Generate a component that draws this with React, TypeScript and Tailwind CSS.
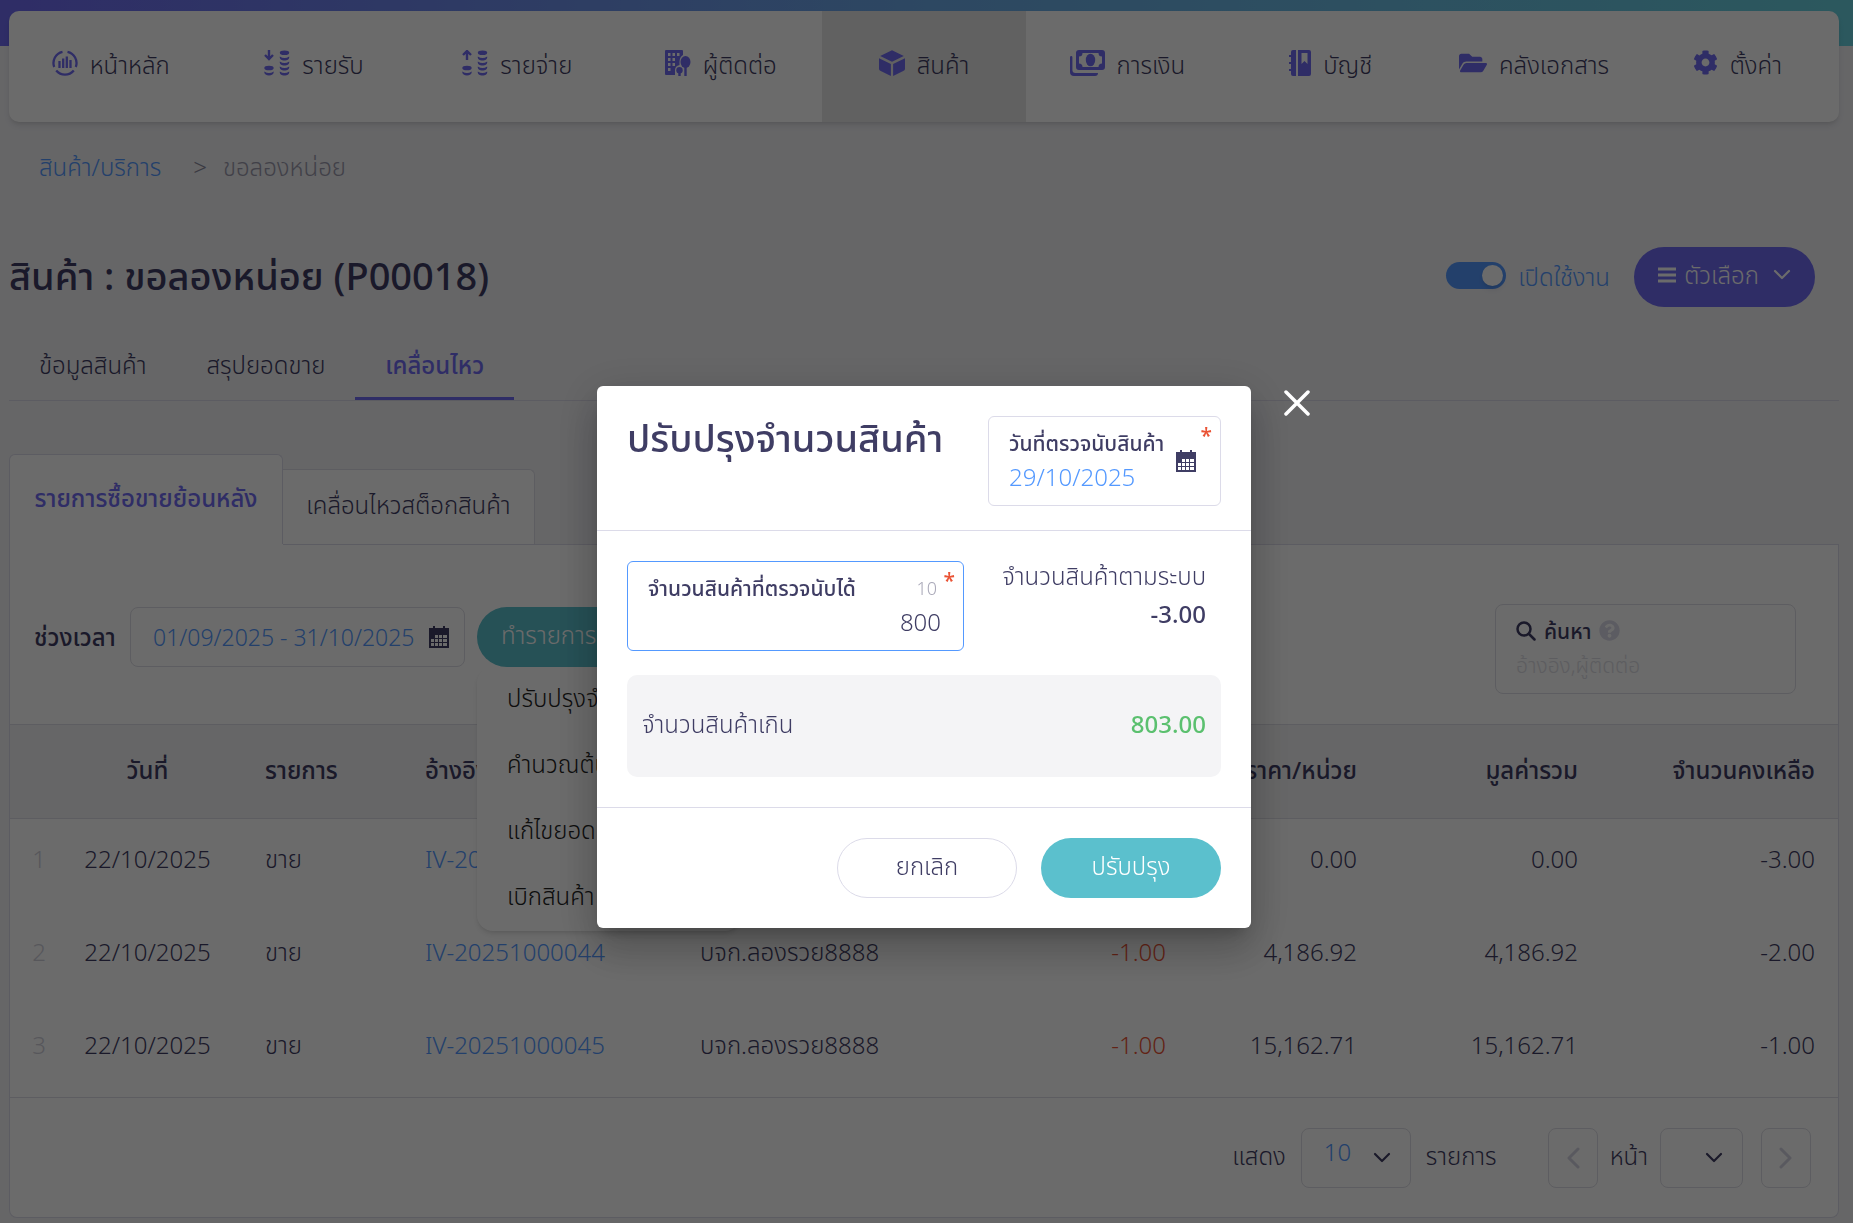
import type { ReactNode } from "react";
import { FaCog, FaFolderOpen, FaQuestionCircle } from "react-icons/fa";

interface NavItem { label: string; icon: ReactNode; active?: boolean }

function HomeIcon() {
  return (
    <svg width="26" height="26" viewBox="0 0 26 26" fill="none" stroke="currentColor" strokeWidth="2.300">
      <path d="M10.500 1.800A11.500 11.500 0 0 0 2.200 17M15.500 1.800A11.500 11.500 0 0 1 23.800 17M4.200 20.500a11.500 11.500 0 0 0 17.600 0" />
      <path d="M7.500 11v7M11.200 8.500v9.500M14.800 6.500v11.500M18.500 10v8" />
    </svg>
  );
}

function CoinsIcon({ up }: { up?: boolean }) {
  return (
    <svg width="26" height="26" viewBox="0 0 26 26" fill="currentColor">
      <ellipse cx="20.500" cy="2.800" rx="4.700" ry="2.300" />
      <path d="M15.800 6.500q4.700 3 9.400 0c.4 2.600-1.800 4-4.700 4s-5.100-1.400-4.700-4zM15.800 11.500q4.700 3 9.400 0c.4 2.600-1.800 4-4.700 4s-5.100-1.400-4.700-4zM15.800 16.500q4.700 3 9.400 0c.4 2.600-1.800 4-4.700 4s-5.100-1.400-4.700-4zM15.800 21.500q4.700 3 9.400 0c.4 2.600-1.800 4-4.700 4s-5.100-1.400-4.700-4z" />
      <ellipse cx="5" cy="18" rx="4.700" ry="2.300" />
      <path d="M.3 21.500q4.700 3 9.400 0c.4 2.600-1.800 4-4.700 4s-5.100-1.400-4.700-4z" />
      <path d={up ? "M5 .5v9.500M1 5l4-4 4 4" : "M5 0v9.500M1 5l4 4 4-4"} fill="none" stroke="currentColor" strokeWidth="2.400" />
    </svg>
  );
}

function ContactIcon() {
  return (
    <svg width="26" height="26" viewBox="0 0 26 26" fill="currentColor">
      <path fillRule="evenodd" d="M1 0h16q1 0 1 1v4q-3.500 2-3.500 7v3q-4.500 1-4.500 5v5H1q-1 0-1-1V1q0-1 1-1zM3 3v3h2.500V3zM7.500 3v3H10V3zM12 3v3h2.500V3zM3 8v3h2.500V8zM7.500 8v3H10V8zM3 13v3h2.500v-3zM7.500 13v3H10v-3zM3 18v3h2.500v-3z" />
      <ellipse cx="20.500" cy="12" rx="5" ry="6" />
      <path d="M19.300 16h2.400v10h-2.400zM13.300 20h2.400v6h-2.400z" />
      <circle cx="14.500" cy="20.300" r="3.200" />
    </svg>
  );
}

function CubeIcon() {
  return (
    <svg width="26" height="26" viewBox="0 0 26 26" fill="currentColor">
      <path d="M13 .3L24.800 6 13 11.700 1.200 6zM0 8.300l11.900 5.800V26L1.300 20.800Q0 20.200 0 18.800zM26 8.300l-11.900 5.800V26l10.600-5.200q1.300-.6 1.300-2z" />
    </svg>
  );
}

function MoneyIcon() {
  return (
    <svg width="35" height="26" viewBox="0 0 35 26" fill="currentColor">
      <path fillRule="evenodd" d="M9 0h23q3 0 3 3v14q0 3-3 3H9q-3 0-3-3V3q0-3 3-3zM12.500 3q0 3.500-3.500 3.500v7q3.500 0 3.500 3.500h16q0-3.500 3.500-3.500v-7q-3.500 0-3.500-3.500z" />
      <ellipse cx="20.500" cy="10" rx="4.700" ry="6.300" />
      <path d="M0 7.200Q0 6 1.200 6t1.200 1.200V20q0 3 3 3H28q0 3-3 3H4q-4 0-4-4z" />
    </svg>
  );
}

function BookIcon() {
  return (
    <svg width="22" height="26" viewBox="0 0 22 26" fill="currentColor">
      <path d="M4 0h3v26H4q-2 0-2-2v-3H0v-2h2v-5H0v-2h2V7H0V5h2V2q0-2 2-2z" />
      <path fillRule="evenodd" d="M9 0h11q2 0 2 2v22q0 2-2 2H9zM12.500 3v11l3-3 3 3V3z" />
    </svg>
  );
}

function CalendarIcon() {
  return (
    <svg width="20" height="22" viewBox="0 0 20 22" fill="currentColor" className="shrink-0">
      <path d="M4 0h2v2H4zM14 0h2v2h-2z" />
      <path fillRule="evenodd" d="M0 2h20v20H0zM6 9v3h3V9zM10 9v3h3V9zM14 9v3h4V9zM2 13v3h3v-3zM6 13v3h3v-3zM10 13v3h3v-3zM14 13v3h4v-3zM2 17v3h3v-3zM6 17v3h3v-3zM10 17v3h3v-3zM14 17v3h4v-3z" />
    </svg>
  );
}

function Chevron({ className }: { className?: string }) {
  return (
    <svg width="18" height="12" viewBox="0 0 18 12" fill="none" stroke="currentColor" strokeWidth="2.200" strokeLinecap="round" strokeLinejoin="round" className={className}>
      <path d="M2 2l7 7 7-7" />
    </svg>
  );
}

function PageArrow({ next }: { next?: boolean }) {
  return (
    <svg width="14" height="22" viewBox="0 0 14 22" fill="none" stroke="currentColor" strokeWidth="3" strokeLinecap="round" strokeLinejoin="round" className="mx-auto">
      <path d={next ? "M2 2l9 9-9 9" : "M12 2l-9 9 9 9"} />
    </svg>
  );
}

const menu: NavItem[] = [
  { label: "หน้าหลัก", icon: <HomeIcon /> },
  { label: "รายรับ", icon: <CoinsIcon /> },
  { label: "รายจ่าย", icon: <CoinsIcon up /> },
  { label: "ผู้ติดต่อ", icon: <ContactIcon /> },
  { label: "สินค้า", icon: <CubeIcon />, active: true },
  { label: "การเงิน", icon: <MoneyIcon /> },
  { label: "บัญชี", icon: <BookIcon /> },
  { label: "คลังเอกสาร", icon: <FaFolderOpen size={28} /> },
  { label: "ตั้งค่า", icon: <FaCog size={25} /> },
];

const rows = [
  { ref: "IV-20251000043", contact: "บจก.ลองรวย8888", qty: "-1.00", price: "0.00", total: "0.00", left: "-3.00" },
  { ref: "IV-20251000044", contact: "บจก.ลองรวย8888", qty: "-1.00", price: "4,186.92", total: "4,186.92", left: "-2.00" },
  { ref: "IV-20251000045", contact: "บจก.ลองรวย8888", qty: "-1.00", price: "15,162.71", total: "15,162.71", left: "-1.00" },
];

const actions = ["ปรับปรุงจำนวนสินค้า", "คำนวณต้นทุนใหม่", "แก้ไขยอดยกมา", "เบิกสินค้า"];

export default function App() {
  return (
    <div className="relative min-h-screen overflow-hidden whitespace-nowrap bg-[#f2f2f6] pb-[5px] font-['Noto_Sans','Noto_Sans_Thai',sans-serif] text-[24px] font-light leading-8 text-[#3f3d64]">
      <header className="h-[122px] bg-[linear-gradient(90deg,#706bf3,#6dabe9_50%,#69d2e0)] bg-[length:100%_46px] bg-no-repeat pt-[11px] pr-[14px] pl-[9px]">
        <nav className="grid h-full grid-cols-9 overflow-hidden rounded-[10px] bg-white shadow-md">
          {menu.map((m) => (
            <a key={m.label} href="#" className={m.active ? "flex items-center justify-center gap-3 bg-[#e6e6e6] pb-1" : "flex items-center justify-center gap-3 pb-1"}>
              <span className="pb-1 text-[#706bf3]">{m.icon}</span>
              {m.label}
            </a>
          ))}
        </nav>
      </header>
      <main className="pr-[14px] pl-[9px]">
        <div className="flex px-[30px] pt-[29px]">
          <a href="#" className="text-[#5499ff]">สินค้า/บริการ</a>
          <span className="pr-4 pl-8 text-[#8b8a9c]">&gt;</span>
          <span className="text-[#9b9aac]">ขอลองหน่อย</span>
        </div>

        <div className="mt-[64px] flex h-[60px] items-center justify-between pr-6">
          <h1 className="pb-1 text-[38px] font-medium">สินค้า : ขอลองหน่อย (P00018)</h1>
          <div className="flex items-center">
            <label className="flex items-center gap-3 text-[#5499ff]">
              <input type="checkbox" defaultChecked className="peer sr-only" />
              <span className="mb-1 flex h-[27px] w-[60px] justify-end rounded-full bg-[#5499ff] p-[3px]">
                <span className="size-[21px] rounded-full bg-white shadow-md" />
              </span>
              เปิดใช้งาน
            </label>
            <button type="button" className="ml-6 flex h-[60px] w-[181px] items-center justify-center gap-2 rounded-full bg-[#706bf3] pb-1 text-white">
              <svg width="18" height="16" viewBox="0 0 18 16" stroke="currentColor" strokeWidth="3"><path d="M0 2h18M0 8h18M0 14h18" /></svg>
              ตัวเลือก
              <Chevron className="ml-1.5" />
            </button>
          </div>
        </div>

        <div className="mt-[30px] flex border-b border-[#dcdbe9]">
          <button type="button" className="h-[63px] px-[30px] pb-2">ข้อมูลสินค้า</button>
          <button type="button" className="h-[63px] px-[30px] pb-2">สรุปยอดขาย</button>
          <button type="button" className="h-[63px] border-b-3 border-[#706bf3] px-[30px] pb-1 font-medium text-[#706bf3]">เคลื่อนไหว</button>
        </div>

        <div className="mt-[53px] flex items-end">
          <button type="button" className="h-[90px] w-[274px] rounded-t-md border border-b-0 border-[#dcdbe9] bg-white pb-1 font-medium text-[#706bf3]">รายการซื้อขายย้อนหลัง</button>
          <button type="button" className="h-[75px] w-[252px] rounded-tr-md border border-b-0 border-l-0 border-[#dedee6] bg-white pb-1">เคลื่อนไหวสต็อกสินค้า</button>
        </div>

        <section className="rounded-b-lg border border-t-0 border-[#dcdbe9] bg-white">
          <div className="flex">
            <div className="w-[273px]" />
            <div className="flex-1 border-t border-[#dcdbe9]" />
          </div>
          <div className="flex h-[179px] items-center justify-between pr-[42px] pl-6">
            <div className="flex items-center pt-1">
              <label htmlFor="range" className="w-24 font-medium">ช่วงเวลา</label>
              <div className="flex h-[60px] w-[335px] items-center rounded-lg border border-[#dedee6] pr-[15px] pl-[22px]">
                <input id="range" defaultValue="01/09/2025 - 31/10/2025" className="w-full min-w-0 flex-1 text-[23px] text-[#5499ff] outline-none" />
                <CalendarIcon />
              </div>
              <div className="relative ml-3">
                <button type="button" className="flex h-[60px] w-[180px] items-center gap-4 rounded-full bg-[#5bc0cd] pb-1 pl-6 text-white">ทำรายการ <Chevron /></button>
                <ul className="absolute top-full left-0 z-10 h-[264px] w-[264px] rounded-2xl bg-white text-[#222] shadow-md">
                  {actions.map((a) => <li key={a}><button type="button" className="h-[66px] px-[30px] pb-1">{a}</button></li>)}
                </ul>
              </div>
            </div>
            <div className="mt-7 h-[90px] w-[301px] rounded-lg border border-[#dedee6] px-5 pt-2.5">
              <label htmlFor="search" className="flex items-center gap-2 text-[21px] font-medium">
                <svg width="20" height="20" viewBox="0 0 20 20" fill="none" stroke="currentColor" strokeWidth="2.500" strokeLinecap="round"><circle cx="8" cy="8" r="6.500" /><path d="M13 13l5.500 5.500" /></svg>
                ค้นหา
                <FaQuestionCircle size={21} className="text-[#dcdbe9]" />
              </label>
              <input id="search" placeholder="อ้างอิง,ผู้ติดต่อ" className="mt-0.5 w-full text-[21px] outline-none placeholder:text-[#dddde4]" />
            </div>
          </div>

          <table className="w-full table-fixed border-y border-[#dedee6]">
            <colgroup>
              <col className="w-[58px]" /><col className="w-[159px]" /><col className="w-[189px]" /><col className="w-[284px]" /><col />
              <col className="w-[160px]" /><col className="w-[191px]" /><col className="w-[221px]" /><col className="w-[260px]" />
            </colgroup>
            <thead>
              <tr className="h-[94px] border-b border-[#dedee6] bg-[#f4f4f6] text-left [&>th]:p-0 [&>th]:pb-1 [&>th]:font-medium">
                <th /><th className="text-center">วันที่</th><th className="!pl-[38px]">รายการ</th><th className="!pl-[9px]">อ้างอิง</th><th>ผู้ติดต่อ</th>
                <th className="text-right">จำนวน</th><th className="text-right">ราคา/หน่วย</th><th className="text-right">มูลค่ารวม</th><th className="!pr-[23px] text-right">จำนวนคงเหลือ</th>
              </tr>
            </thead>
            <tbody>
              {rows.map((r, i) => (
                <tr key={r.ref} className="h-[93px] [&>td]:p-0 [&>td]:pb-3">
                  <td className="text-center text-[#cfcfda]">{i + 1}</td>
                  <td className="text-center">22/10/2025</td>
                  <td className="!pl-[38px]">ขาย</td>
                  <td className="!pl-[9px]"><a href="#" className="text-[#5499ff]">{r.ref}</a></td>
                  <td>{r.contact}</td>
                  <td className="text-right text-[#ea5335]">{r.qty}</td>
                  <td className="text-right">{r.price}</td>
                  <td className="text-right">{r.total}</td>
                  <td className="!pr-[23px] text-right">{r.left}</td>
                </tr>
              ))}
            </tbody>
          </table>

          <div className="flex h-[119px] items-center justify-end pr-[27px]">
            <label htmlFor="size" className="pb-1">แสดง</label>
            <div className="relative mx-[15px] h-[60px] w-[110px]">
              <select id="size" className="h-full w-full appearance-none rounded-lg border border-[#dedee6] pb-3 pl-[22px] text-[#5499ff]"><option>10</option></select>
              <Chevron className="absolute top-6 right-5" />
            </div>
            <span className="mr-[51px] pb-1">รายการ</span>
            <button type="button" aria-label="ก่อนหน้า" className="h-[60px] w-[50px] rounded-lg border border-[#dedee6] text-[#d5d4e2]"><PageArrow /></button>
            <label htmlFor="page" className="mx-3 pb-1">หน้า</label>
            <div className="relative mr-[18px] h-[60px] w-[83px]">
              <select id="page" className="h-full w-full appearance-none rounded-lg border border-[#dedee6]"><option></option></select>
              <Chevron className="absolute top-6 right-5" />
            </div>
            <button type="button" aria-label="ถัดไป" className="h-[60px] w-[50px] rounded-lg border border-[#dedee6] text-[#d5d4e2]"><PageArrow next /></button>
          </div>
        </section>
      </main>

      <div className="fixed inset-0 z-20 flex items-start justify-center bg-black/58 pt-[386px]">
        <div role="dialog" aria-modal="true" className="relative mr-[5px] w-[654px] rounded-md bg-white shadow-[0_11px_15px_-7px_rgba(0,0,0,.2),0_24px_38px_3px_rgba(0,0,0,.14),0_9px_46px_8px_rgba(0,0,0,.12)]">
          <button type="button" aria-label="ปิด" className="absolute top-1 -right-[59px] text-white">
            <svg width="26" height="26" viewBox="0 0 26 26" stroke="currentColor" strokeWidth="3.500" strokeLinecap="round"><path d="M2 2l22 22M24 2L2 24" /></svg>
          </button>
          <div className="flex h-[145px] items-start justify-between border-b border-[#dcdbe9] p-[30px]">
            <h2 className="text-[38px] leading-[42px] font-medium">ปรับปรุงจำนวนสินค้า</h2>
            <div className="relative flex h-[90px] w-[233px] items-center justify-between rounded-md border border-[#dcdbe9] pr-6 pl-5">
              <div className="flex min-w-0 flex-col gap-0.5 pb-0.5">
                <label htmlFor="date" className="text-[21px] font-medium">วันที่ตรวจนับสินค้า</label>
                <input id="date" defaultValue="29/10/2025" className="w-36 text-[#5499ff] outline-none" />
              </div>
              <CalendarIcon />
              <span className="absolute top-0.5 right-2 text-[21px] font-medium text-[#ea5335]">*</span>
            </div>
          </div>
          <div className="h-[276px] p-[30px]">
            <div className="flex justify-between">
              <div className="relative h-[90px] w-[337px] rounded-md border border-[#5499ff] px-5 pt-2.5">
                <div className="flex items-center justify-between pr-1.5">
                  <label htmlFor="qty" className="text-[21px] font-medium">จำนวนสินค้าที่ตรวจนับได้</label>
                  <span className="text-[18px] text-[#a9a8b8]">10</span>
                </div>
                <input id="qty" defaultValue="800" className="mt-0.5 w-full pr-0.5 text-right outline-none" />
                <span className="absolute top-0.5 right-2 text-[21px] font-medium text-[#ea5335]">*</span>
              </div>
              <div className="-mt-1 pr-[15px] text-right leading-[38px]">
                <p>จำนวนสินค้าตามระบบ</p>
                <p className="font-medium">-3.00</p>
              </div>
            </div>
            <div className="mt-6 flex h-[102px] items-center justify-between rounded-[10px] bg-[#f4f4f6] px-[15px] pb-1">
              <span>จำนวนสินค้าเกิน</span>
              <span className="font-medium text-[#5bc06f]">803.00</span>
            </div>
          </div>
          <div className="flex justify-end gap-6 border-t border-[#dcdbe9] p-[30px]">
            <button type="button" className="h-[60px] w-[180px] rounded-full border border-[#dcdbe9] pb-1">ยกเลิก</button>
            <button type="button" className="h-[60px] w-[180px] rounded-full bg-[#5bc0cd] pb-1 text-white">ปรับปรุง</button>
          </div>
        </div>
      </div>
    </div>
  );
}
